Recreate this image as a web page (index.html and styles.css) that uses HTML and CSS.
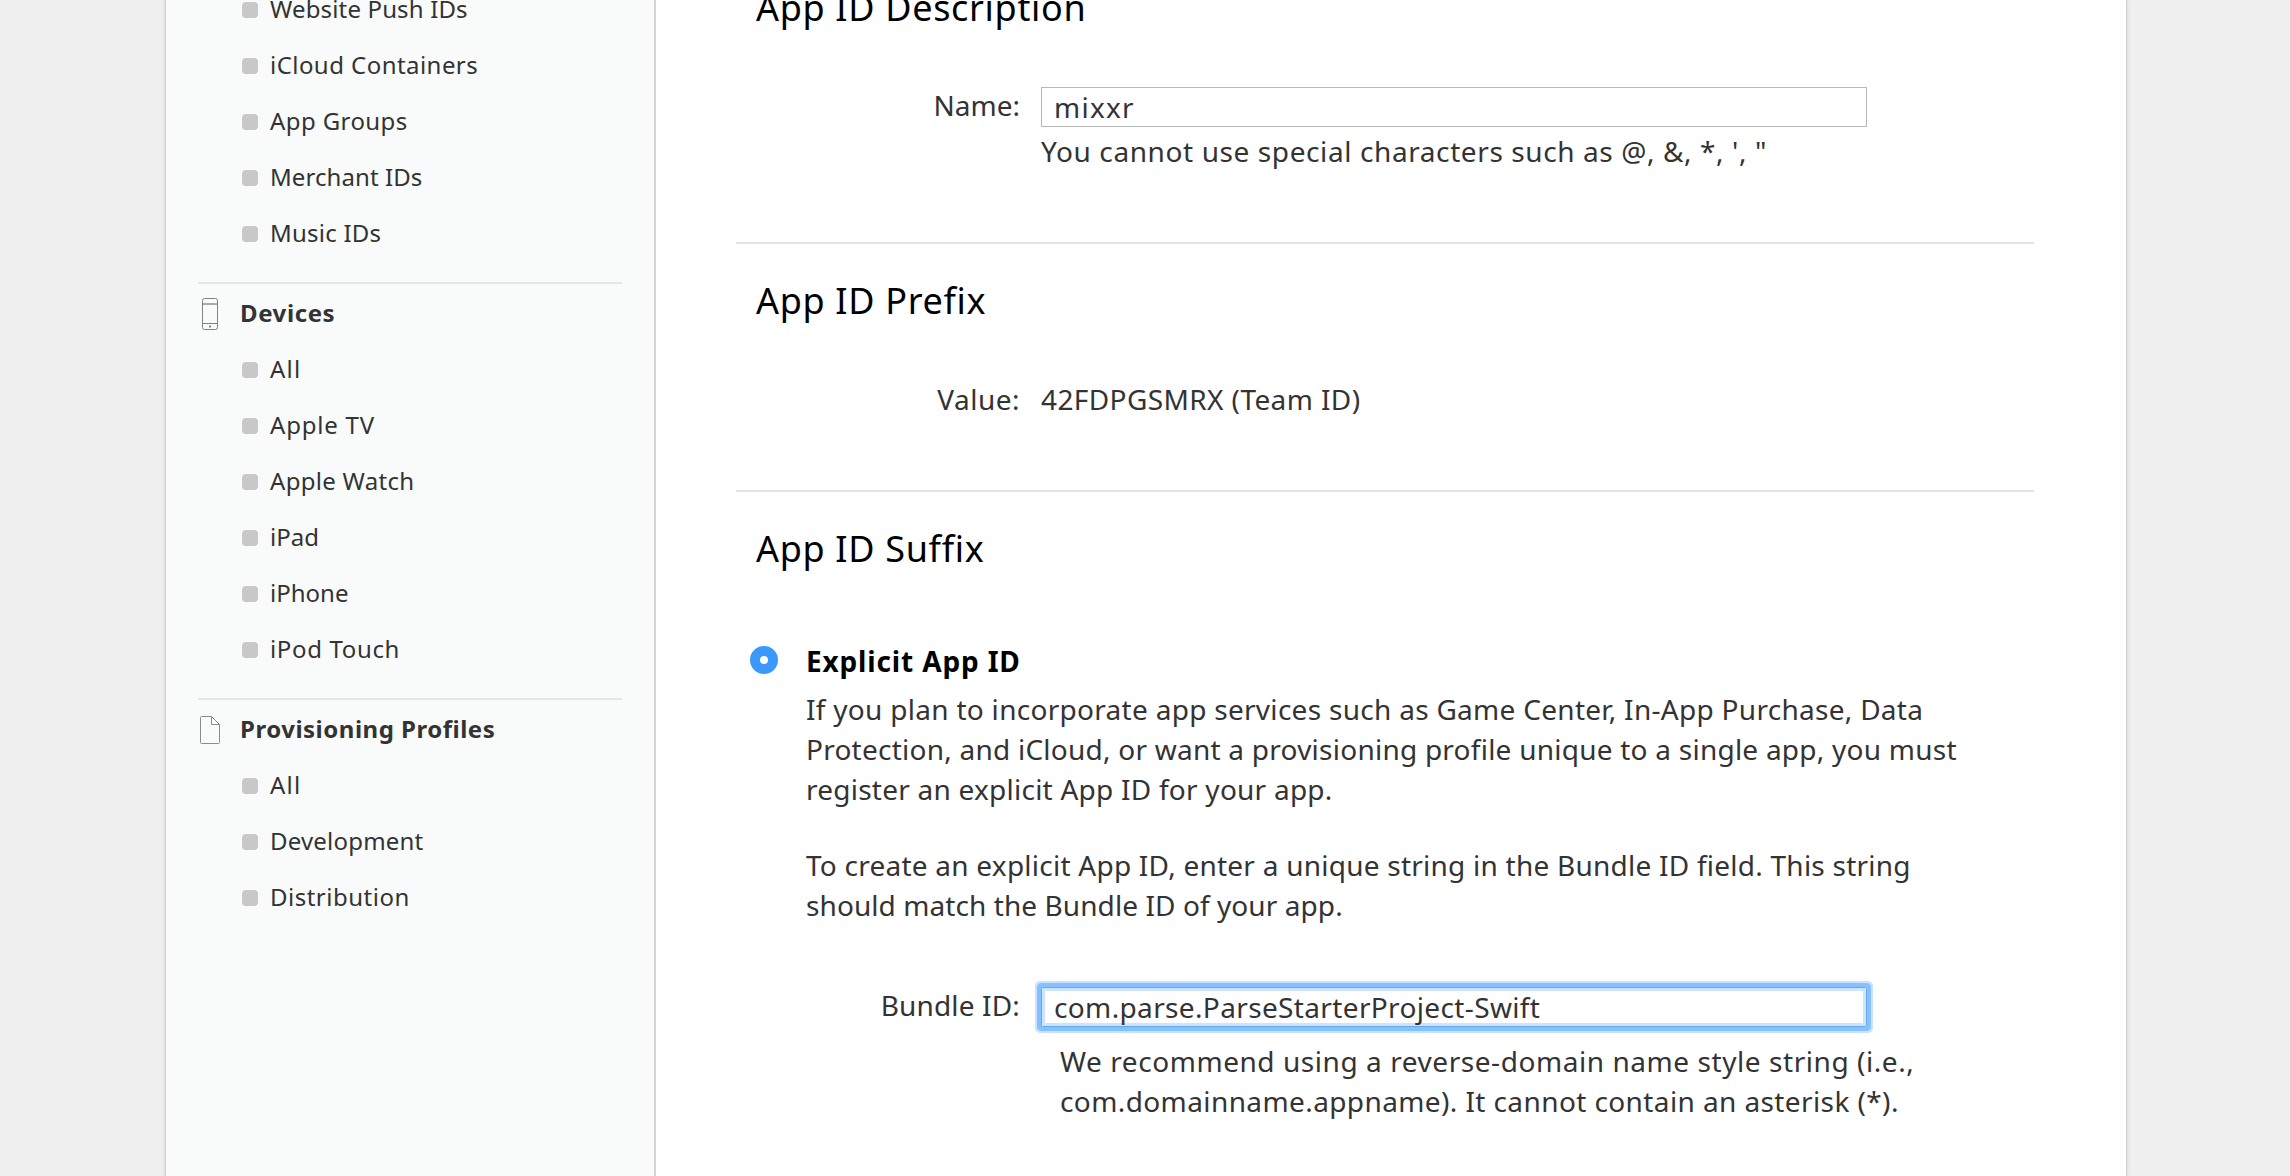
FILE: index.html
```html
<!DOCTYPE html>
<html lang="en">
<head>
<meta charset="utf-8">
<title>Register App ID</title>
<link rel="stylesheet" href="styles.css">
</head>
<body>
<div class="page">
  <nav class="sidebar">
    <ul class="links">
      <li class="ls-15"><a>Website Push IDs</a></li>
      <li class="ls-45"><a>iCloud Containers</a></li>
      <li class="ls-40"><a>App Groups</a></li>
      <li class="ls-10"><a>Merchant IDs</a></li>
      <li class="ls-25"><a>Music IDs</a></li>
    </ul>
    <h2 class="group ls-60">
      <svg class="icon" width="24" height="32" viewBox="0 0 24 32" fill="none" stroke="#828282">
        <rect x="4.5" y=".5" width="15" height="31" rx="2"/>
        <path d="M5 6h14" stroke="#aaa" stroke-width="2"/>
        <path d="M5 25.5h14"/>
        <path d="M11 28.5h2" stroke-width="2"/>
      </svg>
      Devices
    </h2>
    <ul class="links">
      <li class="ls-125"><a>All</a></li>
      <li class="ls-80"><a>Apple TV</a></li>
      <li class="ls-30"><a>Apple Watch</a></li>
      <li><a>iPad</a></li>
      <li><a>iPhone</a></li>
      <li class="ls-65"><a>iPod Touch</a></li>
    </ul>
    <h2 class="group ls-50">
      <svg class="icon" width="24" height="28" viewBox="0 0 24 28" fill="none" stroke="#8c8c8c">
        <path d="M13.5.5h-10q-1 0-1 1v25q0 1 1 1h17q1 0 1-1v-18l-8-8v8h8" stroke-linejoin="round"/>
      </svg>
      Provisioning Profiles
    </h2>
    <ul class="links">
      <li class="ls-125"><a>All</a></li>
      <li class="ls-20"><a>Development</a></li>
      <li class="ls-50"><a>Distribution</a></li>
    </ul>
  </nav>
  <main class="content">
    <section class="section">
      <h1 class="title">App ID Description</h1>
      <div class="field">
        <label class="label" for="name">Name:</label>
        <div>
          <input class="input ls-125" id="name" type="text" value="mixxr">
          <p class="help ls-60">You cannot use special characters such as @, &amp;, *, ', "</p>
        </div>
      </div>
    </section>
    <section class="section">
      <h1 class="title">App ID Prefix</h1>
      <div class="field">
        <span class="label ls-50">Value:</span>
        <span class="ls-40">42FDPGSMRX (Team ID)</span>
      </div>
    </section>
    <section class="section">
      <h1 class="title">App ID Suffix</h1>
      <div class="option">
        <span class="radio"></span>
        <div>
          <h3 class="option-title">Explicit App ID</h3>
          <p class="text"><span class="ls-30">If you plan to incorporate app services such as Game Center, In-App Purchase, Data</span><br><span class="ls-25">Protection, and iCloud, or want a provisioning profile unique to a single app, you must</span><br><span class="ls-25">register an explicit App ID for your app.</span></p>
          <p class="text"><span class="ls-25">To create an explicit App ID, enter a unique string in the Bundle ID field. This string</span><br><span class="ls-10">should match the Bundle ID of your app.</span></p>
        </div>
      </div>
      <div class="field field-bundle">
        <label class="label ls-15" for="bundle">Bundle ID:</label>
        <div>
          <input class="input input-active ls-35" id="bundle" type="text" value="com.parse.ParseStarterProject-Swift">
          <p class="help help-bundle"><span class="ls-55">We recommend using a reverse-domain name style string (i.e.,</span><br><span class="ls-40">com.domainname.appname). It cannot contain an asterisk (*).</span></p>
        </div>
      </div>
    </section>
  </main>
</div>
</body>
</html>
```
FILE: styles.css
```css
* {
  box-sizing: border-box;
}

body {
  margin: 0;
  height: 1176px;
  overflow: hidden;
  background: #f0f0f0;
  color: #333;
  font: 28px/40px "Noto Sans", "Open Sans", sans-serif;
}

h1, h2, h3, p, ul {
  margin: 0;
  padding: 0;
  font-weight: 400;
}

.page {
  display: flex;
  width: 1960px;
  height: 1176px;
  margin-left: 166px;
  background: #fff;
  box-shadow: 0 0 0 1px #d0d0d0, 0 0 6px rgba(0, 0, 0, .16);
}

/* Sidebar */
.sidebar {
  width: 490px;
  flex: none;
  padding: 0 32px;
  overflow: hidden;
  background: #f9fbfa;
  border-right: 2px solid #d4d4d4;
  font-size: 24px;
}

.links {
  list-style: none;
  padding: 0 0 20px 44px;
}

.links:first-child {
  margin-top: -18px;
}

.links li {
  display: flex;
  align-items: center;
  gap: 12px;
  height: 56px;
}

.links li::before {
  content: "";
  width: 16px;
  height: 16px;
  border-radius: 4px;
  background: #c8c8c8;
}

.links a {
  line-height: 54px;
  padding-bottom: 2px;
}

.group {
  display: flex;
  align-items: center;
  gap: 18px;
  height: 60px;
  border-top: 2px solid #e4e6e5;
  font-size: 24px;
  font-weight: 700;
}

.icon {
  flex: none;
  margin-top: 2px;
}

/* Form */
.content {
  flex: 1;
  margin-top: -49px;
  padding: 0 92px 0 80px;
}

.section {
  padding: 33px 0 71px;
}

.section + .section {
  border-top: 2px solid #e3e3e3;
}

.title {
  padding-left: 20px;
  margin-bottom: 54px;
  color: #000;
  font-size: 36px;
  line-height: 48px;
  letter-spacing: .68px;
}

.section:first-child .title {
  margin-bottom: 53px;
}

.field {
  display: grid;
  grid-template-columns: 284px 1fr;
  column-gap: 21px;
}

.label {
  text-align: right;
}

.input {
  display: block;
  width: 826px;
  height: 40px;
  margin: 2px 0 4px;
  padding: 0 12px;
  border: 1px solid #b8b8b8;
  border-radius: 0;
  outline: none;
  background: #fff;
  color: #333;
  font-family: inherit;
  font-size: 28px;
}

.input-active {
  border-color: #6aa6ec;
  border-radius: 1.5px;
  box-shadow: 0 0 0 4px #85c0ff, 0 0 0 6px #c8e3ff, inset 0 0 0 3px #cbe4ff;
}

.option {
  display: grid;
  grid-template-columns: 28px 1fr;
  column-gap: 28px;
  padding-left: 14px;
}

.title + .option {
  margin-top: 68px;
}

.radio {
  width: 28px;
  height: 28px;
  margin-top: 5px;
  border: 10px solid #3b99fc;
  border-radius: 50%;
  background: #fff;
}

.option-title {
  margin-bottom: 8px;
  color: #000;
  font-size: 28px;
  font-weight: 700;
  letter-spacing: .85px;
}

.text {
  white-space: nowrap;
}

.text + .text {
  margin-top: 36px;
}

.field-bundle {
  margin-top: 60px;
}

.help {
  white-space: nowrap;
}

.help-bundle {
  margin-top: 14px;
  padding-left: 19px;
}

/* Tracking */
.ls-10 { letter-spacing: .08px; }
.ls-15 { letter-spacing: .15px; }
.ls-20 { letter-spacing: .2px; }
.ls-25 { letter-spacing: .24px; }
.ls-30 { letter-spacing: .29px; }
.ls-35 { letter-spacing: .36px; }
.ls-40 { letter-spacing: .4px; }
.ls-45 { letter-spacing: .45px; }
.ls-50 { letter-spacing: .5px; }
.ls-55 { letter-spacing: .56px; }
.ls-60 { letter-spacing: .6px; }
.ls-65 { letter-spacing: .65px; }
.ls-80 { letter-spacing: .8px; }
.ls-125 { letter-spacing: 1.25px; }
```
